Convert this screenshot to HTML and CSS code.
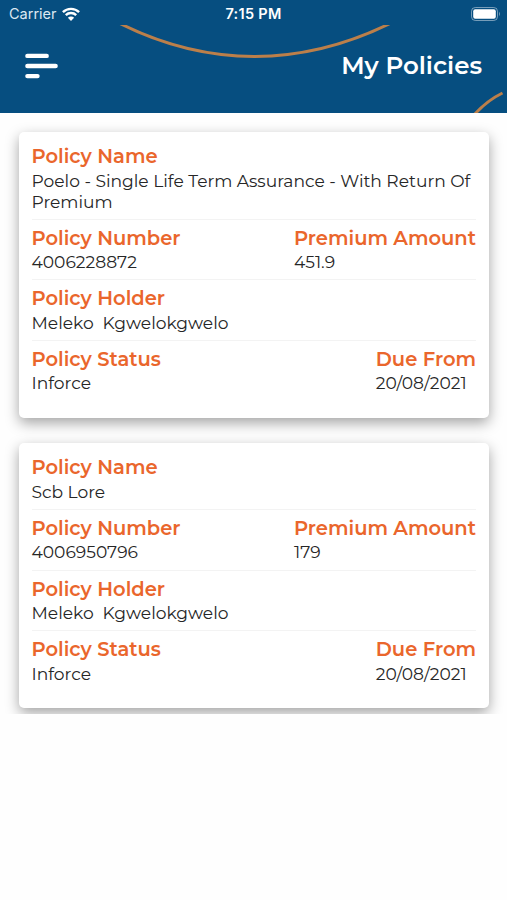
FILE: index.html
```html
<!DOCTYPE html>
<html lang="en">
<head>
  <meta charset="UTF-8" />
  <meta name="viewport" content="width=device-width, initial-scale=1.0" />
  <title>My Policies</title>
  <link rel="stylesheet" href="styles.css">
</head>
<body>

  <header class="header">
    <div class="status-bar">
      <div class="carrier">
        <span>Carrier</span>
        <svg width="18" height="14" viewBox="0 0 18 14">
          <g fill="none" stroke="#fff" stroke-width="2.4">
            <path d="M0.9 5.2 A11.6 11.6 0 0 1 17.1 5.2" />
            <path d="M3.8 8.2 A7.4 7.4 0 0 1 14.2 8.2" />
          </g>
          <path d="M9 14 L5.9 10.7 A4.4 4.4 0 0 1 12.1 10.7 Z" fill="#fff" />
        </svg>
      </div>
      <span class="time">7:15 PM</span>
      <svg class="battery" width="30" height="14" viewBox="0 0 30 14">
        <rect x="0.5" y="0.5" width="26" height="13" rx="3.8" fill="none" stroke="#fff" stroke-opacity="0.45" />
        <rect x="2.2" y="2.2" width="22.6" height="9.6" rx="2" fill="#fff" />
        <path d="M28 4.8 Q29.9 7 28 9.2 Z" fill="#fff" fill-opacity="0.45" />
      </svg>
    </div>

    <div class="nav-bar">
      <!-- decorative arcs -->
      <svg class="arcs" width="507" height="88" viewBox="0 0 507 88">
        <g fill="none" stroke="#bb7f4a" stroke-width="3">
          <path d="M120 -1.5 C208 42.5 301 42.5 391 -2" />
          <path d="M474 90 Q487 75.5 502.5 68" />
        </g>
      </svg>
      <svg class="menu" width="33" height="26" viewBox="0 0 33 26">
        <g stroke="#fff" stroke-width="4.4" stroke-linecap="round">
          <path d="M2.4 2.9 H21.7" />
          <path d="M2.4 13 H30.6" />
          <path d="M2.4 23.1 H12.5" />
        </g>
      </svg>
      <h1>My Policies</h1>
    </div>
  </header>

  <main class="policies">
    <section class="card">
      <div class="row">
        <div class="field">
          <h2>Policy Name</h2>
          <p>Poelo - Single Life Term Assurance - With Return Of Premium</p>
        </div>
      </div>
      <div class="row">
        <div class="field">
          <h2>Policy Number</h2>
          <p>4006228872</p>
        </div>
        <div class="field">
          <h2>Premium Amount</h2>
          <p>451.9</p>
        </div>
      </div>
      <div class="row">
        <div class="field">
          <h2>Policy Holder</h2>
          <p>Meleko&nbsp; Kgwelokgwelo</p>
        </div>
      </div>
      <div class="row">
        <div class="field">
          <h2>Policy Status</h2>
          <p>Inforce</p>
        </div>
        <div class="field">
          <h2>Due From</h2>
          <p>20/08/2021</p>
        </div>
      </div>
    </section>

    <section class="card">
      <div class="row">
        <div class="field">
          <h2>Policy Name</h2>
          <p>Scb Lore</p>
        </div>
      </div>
      <div class="row">
        <div class="field">
          <h2>Policy Number</h2>
          <p>4006950796</p>
        </div>
        <div class="field">
          <h2>Premium Amount</h2>
          <p>179</p>
        </div>
      </div>
      <div class="row">
        <div class="field">
          <h2>Policy Holder</h2>
          <p>Meleko&nbsp; Kgwelokgwelo</p>
        </div>
      </div>
      <div class="row">
        <div class="field">
          <h2>Policy Status</h2>
          <p>Inforce</p>
        </div>
        <div class="field">
          <h2>Due From</h2>
          <p>20/08/2021</p>
        </div>
      </div>
    </section>
  </main>

</body>
</html>
```
FILE: styles.css
```css
* { box-sizing: border-box; margin: 0; padding: 0; }
body {
  background-color: #fefefe;
  font-family: Montserrat, Inter, sans-serif;
  color: #262626;
}
.header {
  height: 113px;
  background-color: #064e80;
  color: #fff;
}
.status-bar {
  display: grid;
  grid-template-columns: 1fr auto 1fr;
  align-items: center;
  height: 25px;
  padding: 2px 6px 0 9px;
  font-family: Inter, sans-serif;
  font-size: 14.5px;
}
.carrier {
  display: flex;
  align-items: center;
  gap: 5px;
  color: #dce8f2;
}
.time { margin-right: 3px; font-size: 14.5px; font-weight: 600; letter-spacing: 0.3px; }
.battery { justify-self: end; }
.nav-bar {
  position: relative;
  display: flex;
  justify-content: space-between;
  align-items: center;
  height: 88px;
  padding: 0 25px 7px;
}
.arcs { position: absolute; top: 0; left: 0; }
.menu, h1 { position: relative; }
h1 { font-size: 24.5px; font-weight: 600; line-height: 28px; padding-bottom: 1px; }

/* list ends right under the last card, its shadow is cut there */
.policies {
  display: flex;
  flex-direction: column;
  gap: 25px;
  padding: 19px 18px 6px 19px;
  overflow: hidden;
}
.card {
  padding: 6.4px 13px 17.5px 12.5px;
  background-color: #fff;
  border-radius: 5px;
  box-shadow: 0 5px 14px rgba(0, 0, 0, 0.36);
}
.row {
  display: flex;
  justify-content: space-between;
  padding: 6px 0 6.4px;
  border-bottom: 1px solid #f3f3f3;
}
.row:last-child { border-bottom: none; }
h2 {
  height: 26.5px;
  font-size: 19.5px;
  font-weight: 600;
  line-height: 25px;
  color: #ea662c;
  white-space: nowrap;
}
p {
  font-size: 17.1px;
  line-height: 20.7px;
}
```
